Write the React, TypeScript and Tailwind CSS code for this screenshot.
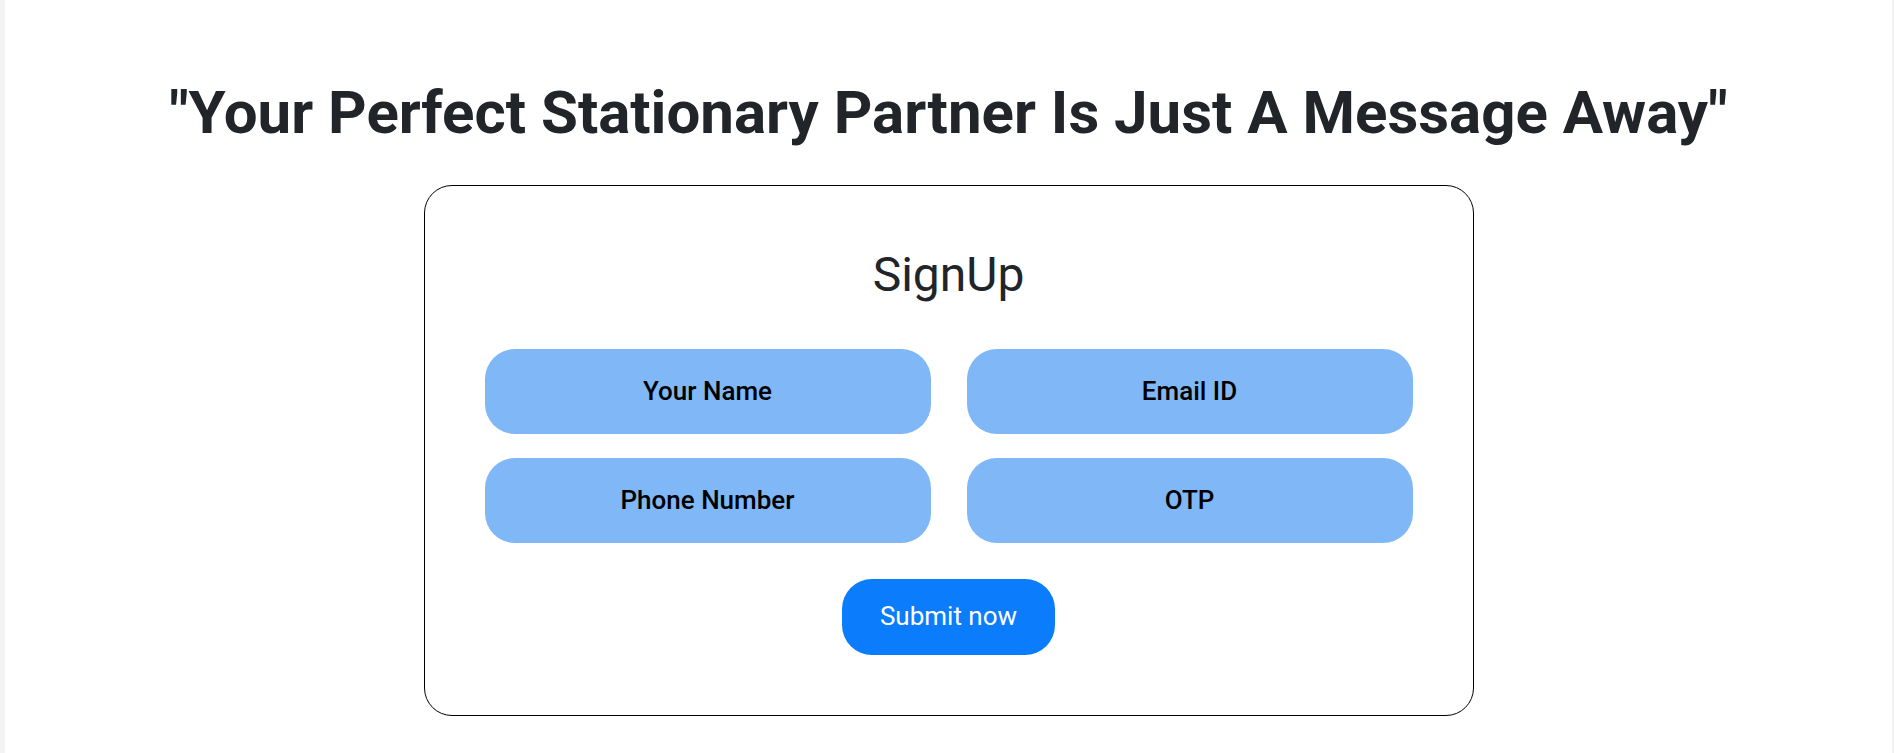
import { useState } from 'react';

const fields = [
  { name: 'name', placeholder: 'Your Name', type: 'text' },
  { name: 'email', placeholder: 'Email ID', type: 'email' },
  { name: 'phone', placeholder: 'Phone Number', type: 'tel' },
  { name: 'otp', placeholder: 'OTP', type: 'text' },
];

export default function App() {
  const [values, setValues] = useState<Record<string, string>>({});

  return (
    <div className="flex min-h-screen bg-white font-['Roboto',sans-serif] text-[#212529]">
      {/* left edge strip */}
      <div className="w-[5px] shrink-0 bg-[#f3f3f3]" />

      <main className="flex flex-1 flex-col items-center pt-[77px]">
        <h1 className="text-[60px] font-bold leading-[1.2]">
          "Your Perfect Stationary Partner Is Just A Message Away"
        </h1>

        <form
          onSubmit={(e) => e.preventDefault()}
          className="mt-[36px] flex w-[1050px] flex-col items-center rounded-[28px] border border-black p-[60px]"
        >
          <h2 className="text-[48px] font-normal leading-[1.2]">SignUp</h2>

          <div className="mt-[45px] grid w-full grid-cols-2 gap-x-[36px] gap-y-[24px]">
            {fields.map((f) => (
              <input
                key={f.name}
                type={f.type}
                name={f.name}
                placeholder={f.placeholder}
                value={values[f.name] ?? ''}
                onChange={(e) => setValues({ ...values, [f.name]: e.target.value })}
                className="h-[85px] w-full rounded-[30px] bg-[#7fb7f7] text-center text-[26px] font-medium text-black outline-none placeholder:text-black"
              />
            ))}
          </div>

          <button
            type="submit"
            className="mt-[36px] h-[76px] rounded-[30px] bg-[#0b7cfb] px-[38px] text-[26px] text-white"
          >
            Submit now
          </button>
        </form>
      </main>

      <div className="w-[2px] shrink-0 bg-[#f3f3f3]" />
    </div>
  );
}
